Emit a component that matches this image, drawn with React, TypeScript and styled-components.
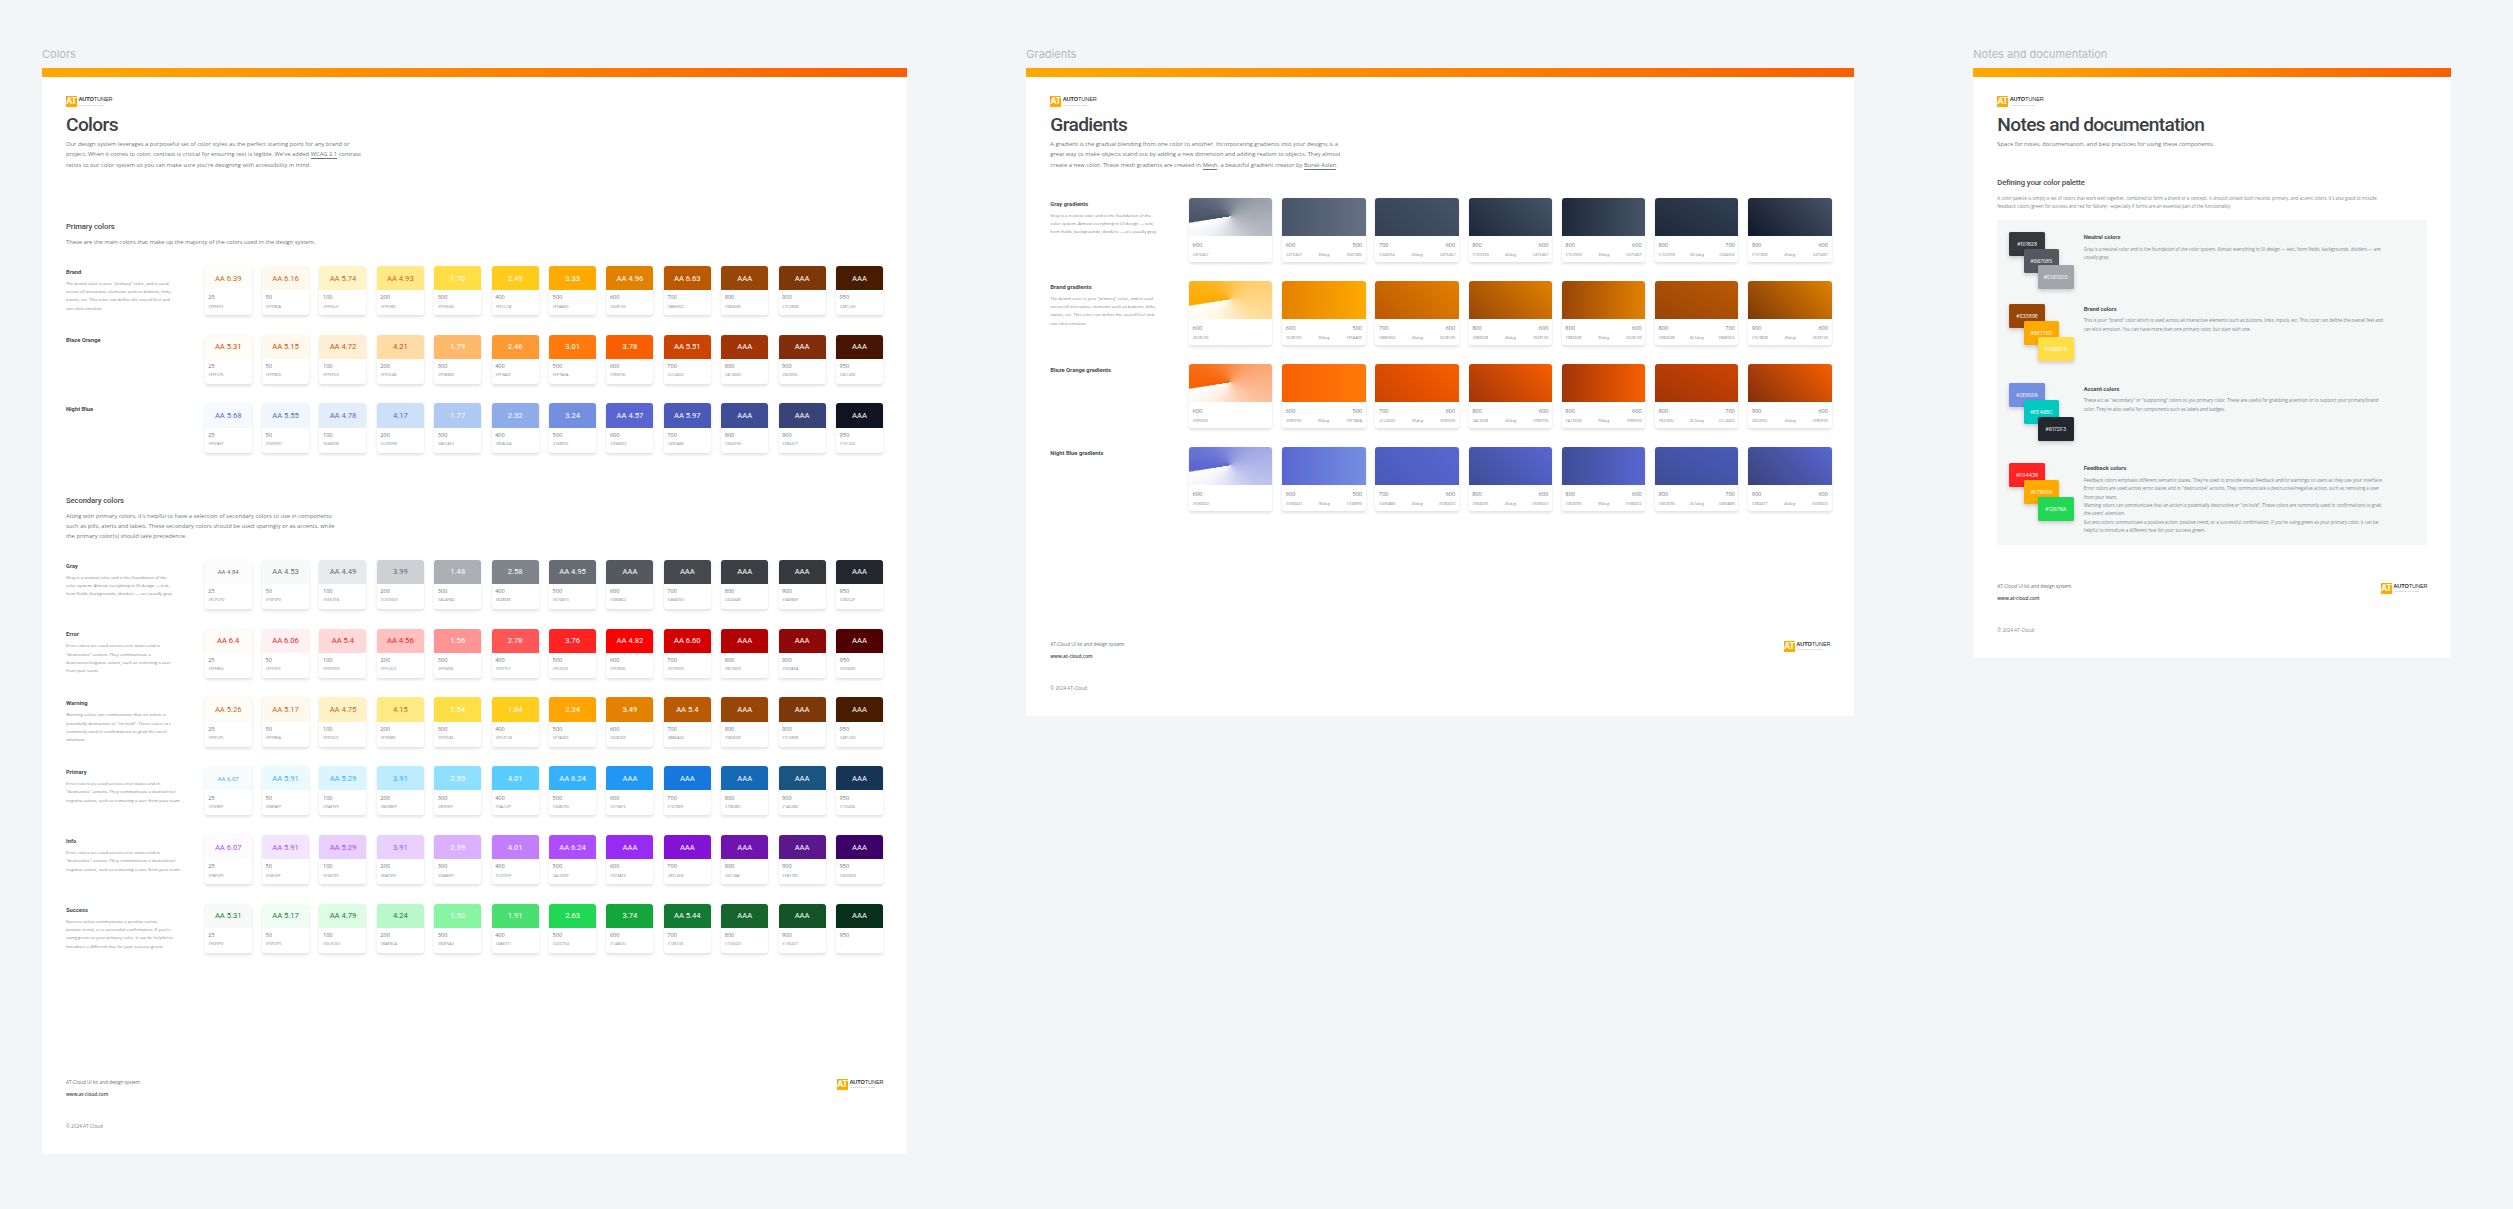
import React, { type ReactElement } from 'react';
import styled, { createGlobalStyle } from 'styled-components';

const HEAD = '"Roboto", "Liberation Sans", sans-serif';
const BODY = '"Open Sans", "Liberation Sans", sans-serif';

interface ISwatch {
  step: string;
  hex: string;
  fill: string;
  label: string;
}

interface IColorRow {
  name: string;
  desc?: string;
  ink: string;
  tiny?: boolean;
  swatches: ISwatch[];
}

interface IGradient {
  from: string;
  to?: string;
  left: string;
  right?: string;
  angle?: string;
  fromHex: string;
  toHex?: string;
}

interface IGradientRow {
  name: string;
  desc?: string;
  cone: string;
  items: IGradient[];
}

const STEPS = ['25', '50', '100', '200', '300', '400', '500', '600', '700', '800', '900', '950'];

const makeSwatches = (hexes: string[], fills: string[], labels: string[]): ISwatch[] =>
  STEPS.map((step, i) => ({ step, hex: hexes[i], fill: fills[i], label: labels[i] }));

const PRIMARY_ROWS: IColorRow[] = [
  {
    name: 'Brand',
    desc: 'The brand color is your "primary" color, and is used\nacross all interactive elements such as buttons, links,\ninputs, etc. This color can define the overall feel and\ncan elicit emotion.',
    ink: '#C9651A',
    swatches: makeSwatches(
      ['#FFFEF5', '#FFF8EA', '#FFF6C5', '#FFE985', '#FFDE46', '#FFCC1B', '#FFAA00', '#E28100', '#BB5902', '#984508', '#7C3808', '#481C00'],
      ['#FFFDF8', '#FFF8EC', '#FFF4C5', '#FFE985', '#FFDE46', '#FFCC1B', '#FFAA00', '#E28100', '#BB5902', '#984508', '#7C3808', '#481C00'],
      ['AA 6.39', 'AA 6.16', 'AA 5.74', 'AA 4.93', '1.70', '2.49', '3.33', 'AA 4.96', 'AA 6.63', 'AAA', 'AAA', 'AAA'],
    ),
  },
  {
    name: 'Blaze Orange',
    ink: '#CC4F0C',
    swatches: makeSwatches(
      ['#FFFCF6', '#FFF8ED', '#FFEFD3', '#FFDCA5', '#FFB96D', '#FF9A32', '#FF7A0A', '#F85F00', '#CC4402', '#A13600', '#822E0C', '#461400'],
      ['#FFFCF6', '#FFF8ED', '#FFEFD5', '#FFDCA5', '#FFB96D', '#FF9A32', '#FF7A0A', '#F85F00', '#CC4402', '#A13508', '#822E0C', '#461400'],
      ['AA 5.31', 'AA 5.15', 'AA 4.72', '4.21', '1.79', '2.46', '3.01', '3.78', 'AA 5.51', 'AAA', 'AAA', 'AAA'],
    ),
  },
  {
    name: 'Night Blue',
    ink: '#5966D2',
    swatches: makeSwatches(
      ['#F5FAFF', '#F0F6FD', '#E4EEFB', '#CDE0F8', '#AFCAF2', '#8FACEA', '#748FE0', '#5966D2', '#495AB9', '#3E4D95', '#384477', '#101322'],
      ['#F5FAFF', '#F0F6FD', '#E4EEFB', '#CDE0F8', '#AFCAF2', '#8FACEA', '#748FE0', '#5966D2', '#495AB9', '#3E4D95', '#384477', '#101322'],
      ['AA 5.68', 'AA 5.55', 'AA 4.78', '4.17', '1.77', '2.32', '3.24', 'AA 4.57', 'AA 5.97', 'AAA', 'AAA', 'AAA'],
    ),
  },
];

const ERROR_TEXT =
  'Error colors are used across error states and in\n"destructive" actions. They communicate a destructive/\nnegative action, such as removing a user from your team.';

const SECONDARY_ROWS: IColorRow[] = [
  {
    name: 'Gray',
    desc: 'Gray is a neutral color and is the foundation of the\ncolor system. Almost everything in UI design — text,\nform fields, backgrounds, dividers — are usually gray.',
    ink: '#676B73',
    tiny: true,
    swatches: makeSwatches(
      ['#FCFCFD', '#F9F9F9', '#E5E7EB', '#CED0D3', '#ACAFB4', '#82868E', '#676B73', '#585B62', '#4B4D53', '#424348', '#3A3B3F', '#282C2F'],
      ['#FCFCFD', '#F8F9F9', '#E8E9EB', '#CED0D3', '#ACAFB4', '#80848B', '#676B73', '#55585F', '#47494E', '#3D3F45', '#37383C', '#23272F'],
      ['AA 4.84', 'AA 4.53', 'AA 4.49', '3.99', '1.48', '2.58', 'AA 4.95', 'AAA', 'AAA', 'AAA', 'AAA', 'AAA'],
    ),
  },
  {
    name: 'Error',
    desc: 'Error colors are used across error states and in\n"destructive" actions. They communicate a\ndestructive/negative action, such as removing a user\nfrom your team.',
    ink: '#F01C1C',
    swatches: makeSwatches(
      ['#FFFBF4', '#FFF0F0', '#FFD0D0', '#FFC0C0', '#FF9494', '#FF5757', '#FF2323', '#FF0000', '#D70000', '#B10303', '#920A0A', '#500000'],
      ['#FFFBF6', '#FFF0F3', '#FFD9D9', '#FFC0C0', '#FF9494', '#FF5757', '#FF2323', '#FF0000', '#D70000', '#B10303', '#8E0A0A', '#500000'],
      ['AA 6.4', 'AA 6.06', 'AA 5.4', 'AA 4.56', '1.56', '2.78', '3.76', 'AA 4.82', 'AA 6.60', 'AAA', 'AAA', 'AAA'],
    ),
  },
  {
    name: 'Warning',
    desc: 'Warning colors can communicate that an action is\npotentially destructive or "on-hold". These colors are\ncommonly used in confirmations to grab the users\'\nattention.',
    ink: '#C9651A',
    swatches: makeSwatches(
      ['#FFFCF5', '#FFF8EA', '#FFF3C5', '#FFE985', '#FFDF46', '#FFCD1B', '#F7A000', '#E28200', '#BB5A02', '#984508', '#7C3808', '#481C00'],
      ['#FFFCF7', '#FFF8EC', '#FFF3C5', '#FFEA85', '#FFDF46', '#FFCD1B', '#FFA400', '#E28200', '#BB5A02', '#984508', '#7C3808', '#481C00'],
      ['AA 5.26', 'AA 5.17', 'AA 4.75', '4.15', '1.54', '1.84', '2.34', '3.49', 'AA 5.4', 'AAA', 'AAA', 'AAA'],
    ),
  },
  {
    name: 'Primary',
    desc: ERROR_TEXT,
    ink: '#34B1FF',
    tiny: true,
    swatches: makeSwatches(
      ['#F5FBFF', '#EBFAFF', '#DAF5FF', '#BDEBFF', '#8FE0FF', '#5ACCFF', '#34B1FD', '#2196F3', '#1678DF', '#186385', '#1A5480', '#153456'],
      ['#F8FBFD', '#EBFAFF', '#DAF5FF', '#BDEBFF', '#8FE0FF', '#5ACCFF', '#34B1FF', '#2196F3', '#1678DF', '#1669B5', '#1A5480', '#153456'],
      ['AA 6.07', 'AA 5.91', 'AA 5.29', '3.91', '2.39', '4.01', 'AA 6.24', 'AAA', 'AAA', 'AAA', 'AAA', 'AAA'],
    ),
  },
  {
    name: 'Info',
    desc: ERROR_TEXT,
    ink: '#AC4DFF',
    swatches: makeSwatches(
      ['#FBF2FF', '#F4E5FF', '#F4D7FF', '#EAD3FF', '#DAB0FF', '#C37DFF', '#AC4DFF', '#972AF3', '#8314D6', '#6F14AF', '#5B178C', '#3D0069'],
      ['#FDFBFF', '#F4E5FF', '#E9CFFF', '#E8D1FF', '#DAB0FF', '#C37DFF', '#AC4DFF', '#972AF3', '#8314D6', '#6F14AF', '#5B178C', '#3D0069'],
      ['AA 6.07', 'AA 5.91', 'AA 5.29', '3.91', '2.39', '4.01', 'AA 6.24', 'AAA', 'AAA', 'AAA', 'AAA', 'AAA'],
    ),
  },
  {
    name: 'Success',
    desc: 'Success colors communicate a positive action,\npositive trend, or a successful confirmation. If you\'re\nusing green as your primary color, it can be helpful to\nintroduce a different hue for your success green.',
    ink: '#138133',
    swatches: makeSwatches(
      ['#F6FEF9', '#F0FDF5', '#DCFCE4', '#BAF8CA', '#84F5A2', '#4AE071', '#22D754', '#14A53C', '#138133', '#15652D', '#135427', '-'],
      ['#F8FAF9', '#F0FDF5', '#DCFCE4', '#BAF8CA', '#88F5A2', '#4AE071', '#22D754', '#14A53C', '#137A33', '#15652D', '#135427', '#07301A'],
      ['AA 5.31', 'AA 5.17', 'AA 4.79', '4.24', '1.52', '1.91', '2.63', '3.74', 'AA 5.44', 'AAA', 'AAA', 'AAA'],
    ),
  },
];

const makeGradients = (c: Record<string, string>, pair: [string, string], dark: string, b800: string): IGradient[] => [
  { from: c['600'], left: '600', fromHex: c['600'] },
  { from: c['600'], to: c['500'], left: '600', right: '500', angle: '90deg', fromHex: c['600'], toHex: c['500'] },
  { from: c['700'], to: c['600'], left: '700', right: '600', angle: '45deg', fromHex: c['700'], toHex: c['600'] },
  { from: c['800'], to: c['600'], left: '800', right: '600', angle: '45deg', fromHex: c['800'], toHex: c['600'] },
  { from: c['800'], to: c['600'], left: '800', right: '600', angle: '90deg', fromHex: c['800'], toHex: c['600'] },
  { from: pair[0], to: pair[1], left: '800', right: '700', angle: '26.5deg', fromHex: b800, toHex: pair[1] },
  { from: c['900'], to: c['600'], left: '900', right: '600', angle: '45deg', fromHex: dark, toHex: c['600'] },
];

const GRADIENT_ROWS: IGradientRow[] = [
  {
    name: 'Gray gradients',
    desc: 'Gray is a neutral color and is the foundation of the\ncolor system. Almost everything in UI design — text,\nform fields, backgrounds, dividers — are usually gray.',
    cone: '#475467',
    items: makeGradients(
      { '500': '#667085', '600': '#475467', '700': '#344054', '800': '#1D2939', '900': '#101828' },
      ['#1D2939', '#344054'],
      '#101828',
      '#1D2939',
    ),
  },
  {
    name: 'Brand gradients',
    desc: 'The brand color is your "primary" color, and is used\nacross all interactive elements such as buttons, links,\ninputs, etc. This color can define the overall feel and\ncan elicit emotion.',
    cone: '#FFAA00',
    items: makeGradients(
      { '500': '#FFAA00', '600': '#E28100', '700': '#BB5902', '800': '#984508', '900': '#7C3808' },
      ['#984508', '#BB5902'],
      '#7C3808',
      '#984508',
    ),
  },
  {
    name: 'Blaze Orange gradients',
    cone: '#F85F00',
    items: makeGradients(
      { '500': '#FF7A0A', '600': '#F85F00', '700': '#CC4402', '800': '#A13508', '900': '#822E0C' },
      ['#A13508', '#CC4402'],
      '#822E0C',
      '#822E0C',
    ),
  },
  {
    name: 'Night Blue gradients',
    cone: '#5966D2',
    items: makeGradients(
      { '500': '#748FE0', '600': '#5966D2', '700': '#495AB9', '800': '#3E4D95', '900': '#384477' },
      ['#3E4D95', '#495AB9'],
      '#384477',
      '#3E4D95',
    ),
  },
];

interface IChip {
  hex: string;
  fill: string;
}

interface IPaletteNote {
  title: string;
  text: string;
  after: number;
  chips: IChip[];
}

const NOTES: IPaletteNote[] = [
  {
    title: 'Neutral colors',
    text: 'Gray is a neutral color and is the foundation of the color system. Almost everything in UI design — text, form fields, backgrounds, dividers — are\nusually gray.',
    after: 14.3,
    chips: [
      { hex: '#101828', fill: '#37383C' },
      { hex: '#667085', fill: '#55585F' },
      { hex: '#D0D5DD', fill: '#A3A5AB' },
    ],
  },
  {
    title: 'Brand colors',
    text: 'This is your "brand" color which is used across all interactive elements such as buttons, links, inputs, etc. This color can define the overall feel and\ncan elicit emotion. You can have more than one primary color, but start with one.',
    after: 22,
    chips: [
      { hex: '#53389E', fill: '#984508' },
      { hex: '#9E77ED', fill: '#FFAA00' },
      { hex: '#D6BBFB', fill: '#FFDE46' },
    ],
  },
  {
    title: 'Accent colors',
    text: 'These act as "secondary" or "supporting" colors to you primary color. These are useful for grabbing attention or to support your primary/brand\ncolor. They\'re also useful for components such as labels and badges.',
    after: 22,
    chips: [
      { hex: '#2E90FA', fill: '#748FE0' },
      { hex: '#EE46BC', fill: '#00C9C0' },
      { hex: '#6172F3', fill: '#23272F' },
    ],
  },
  {
    title: 'Feedback colors',
    text: 'Feedback colors emphasis different semantic states. They\'re used to provide visual feedback and/or warnings to users as they use your interface.\nError colors are used across error states and in "destructive" actions. They communicate a destructive/negative action, such as removing a user\nfrom your team.\nWarning colors can communicate that an action is potentially destructive or "on-hold". These colors are commonly used in confirmations to grab\nthe users\' attention.\nSuccess colors communicate a positive action, positive trend, or a successful confirmation. If you\'re using green as your primary color, it can be\nhelpful to introduce a different hue for your success green.',
    after: 0,
    chips: [
      { hex: '#F04438', fill: '#FF2323' },
      { hex: '#F79009', fill: '#FFAA00' },
      { hex: '#12B76A', fill: '#22D754' },
    ],
  },
];

const Logo = (): ReactElement => (
  <LogoWrapper>
    <LogoMark>AT</LogoMark>
    <LogoWords>
      <LogoName>
        AUTO<LogoNameLight>TUNER</LogoNameLight>
      </LogoName>
      <LogoTag>AUTOMOTIVE TOOL</LogoTag>
    </LogoWords>
  </LogoWrapper>
);

const Footer = (): ReactElement => (
  <FooterWrapper>
    <div>
      <FooterText>AT-Cloud UI kit and design system</FooterText>
      <FooterLink>www.at-cloud.com</FooterLink>
      <FooterCopy>© 2024 AT-Cloud</FooterCopy>
    </div>
    <FooterLogo>
      <Logo />
    </FooterLogo>
  </FooterWrapper>
);

const ColorRows = ({ rows }: { rows: IColorRow[] }): ReactElement => (
  <Rows>
    {rows.map((row) => (
      <ColorRowWrapper key={row.name}>
        <RowInfo>
          <RowName>{row.name}</RowName>
          {row.desc && <RowDesc>{row.desc}</RowDesc>}
        </RowInfo>
        <SwatchGrid>
          {row.swatches.map((s, i) => (
            <Card key={s.step}>
              <Swatch $fill={s.fill} $ink={i < 4 ? row.ink : '#fff'} $tiny={Boolean(row.tiny) && i === 0}>
                {s.label}
              </Swatch>
              <CardMeta>
                <StepName>{s.step}</StepName>
                <HexCode>{s.hex}</HexCode>
              </CardMeta>
            </Card>
          ))}
        </SwatchGrid>
      </ColorRowWrapper>
    ))}
  </Rows>
);

const GradientRows = (): ReactElement => (
  <GradientList>
    {GRADIENT_ROWS.map((row) => (
      <ColorRowWrapper key={row.name}>
        <RowInfo>
          <RowName>{row.name}</RowName>
          {row.desc && <RowDesc>{row.desc}</RowDesc>}
        </RowInfo>
        <GradientGrid>
          {row.items.map((g, i) => (
            <GradientCard key={i}>
              <GradientFill
                $bg={
                  g.to
                    ? `linear-gradient(${g.angle}, ${g.from}, ${g.to})`
                    : `conic-gradient(from 262deg at 50% 48%, ${row.cone} 0%, #fff 99.4%, ${row.cone} 100%)`
                }
              />
              <GradientMeta>
                <MetaLine>
                  <StepName>{g.left}</StepName>
                  {g.right && <StepName>{g.right}</StepName>}
                </MetaLine>
                <MetaLine>
                  <HexCode>{g.fromHex}</HexCode>
                  {g.angle && <HexCode>{g.angle}</HexCode>}
                  {g.toHex && <HexCode>{g.toHex}</HexCode>}
                </MetaLine>
              </GradientMeta>
            </GradientCard>
          ))}
        </GradientGrid>
      </ColorRowWrapper>
    ))}
  </GradientList>
);

const App = (): ReactElement => (
  <Canvas>
    <GlobalStyle />
    <Column $width={865}>
      <FrameLabel>Colors</FrameLabel>
      <Frame $height={1086}>
        <TopBar />
        <FrameBody>
          <Logo />
          <Title>Colors</Title>
          <Intro>
            Our design system leverages a purposeful set of color styles as the perfect starting point for any brand or
            {'\n'}project. When it comes to color, contrast is critical for ensuring text is legible. We've added{' '}
            <InlineLink>WCAG 2.1</InlineLink> contrast{'\n'}ratios to our color system so you can make sure you're
            designing with accessibility in mind.
          </Intro>
          <SectionHead $top={51.2}>Primary colors</SectionHead>
          <Intro $top={3.7}>These are the main colors that make up the majority of the colors used in the design system.</Intro>
          <RowsSpacer $top={19}>
            <ColorRows rows={PRIMARY_ROWS} />
          </RowsSpacer>
          <SectionHead $top={42.7}>Secondary colors</SectionHead>
          <Intro $top={3.6}>
            Along with primary colors, it's helpful to have a selection of secondary colors to use in components{'\n'}such
            as pills, alerts and labels. These secondary colors should be used sparingly or as accents, while{'\n'}the
            primary color(s) should take precedence.
          </Intro>
          <RowsSpacer $top={18.1}>
            <ColorRows rows={SECONDARY_ROWS} />
          </RowsSpacer>
          <Footer />
        </FrameBody>
      </Frame>
    </Column>
    <Column $width={827.7}>
      <FrameLabel>Gradients</FrameLabel>
      <Frame $height={648}>
        <TopBar />
        <FrameBody>
          <Logo />
          <Title>Gradients</Title>
          <Intro>
            A gradient is the gradual blending from one color to another. Incorporating gradients into your designs is a
            {'\n'}great way to make objects stand out by adding a new dimension and adding realism to objects. They almost
            {'\n'}create a new color. These mesh gradients are created in <InlineLink>Mesh</InlineLink>, a beautiful
            gradient creator by <InlineLink>Burak Aslan</InlineLink>.
          </Intro>
          <RowsSpacer $top={28}>
            <GradientRows />
          </RowsSpacer>
          <Footer />
        </FrameBody>
      </Frame>
    </Column>
    <Column $width={477.7}>
      <FrameLabel>Notes and documentation</FrameLabel>
      <Frame $height={590}>
        <TopBar />
        <FrameBody>
          <Logo />
          <Title>Notes and documentation</Title>
          <Intro>Space for notes, documentation, and best practices for using these components.</Intro>
          <SectionHead $top={28}>Defining your color palette</SectionHead>
          <SmallCopy>
            A color palette is simply a set of colors that work well together, combined to form a brand or a concept. It
            should contain both neutral, primary, and accent colors. It's also good to include{'\n'}feedback colors (green
            for success and red for failure) - especially if forms are an essential part of the functionality.
          </SmallCopy>
          <Panel>
            {NOTES.map((note) => (
              <NoteRow key={note.title} $after={note.after}>
                <ChipStack>
                  {note.chips.map((chip, i) => (
                    <Chip key={chip.hex} $fill={chip.fill} $index={i}>
                      {chip.hex}
                    </Chip>
                  ))}
                </ChipStack>
                <NoteText>
                  <NoteTitle>{note.title}</NoteTitle>
                  <NoteCopy>{note.text}</NoteCopy>
                </NoteText>
              </NoteRow>
            ))}
          </Panel>
          <Footer />
        </FrameBody>
      </Frame>
    </Column>
  </Canvas>
);

export default App;

const GlobalStyle = createGlobalStyle`
  html, body {
    margin: 0;
    padding: 0;
    background: #f4f5f7;
  }
  * {
    box-sizing: border-box;
  }
`;

const Canvas = styled.div`
  display: flex;
  column-gap: 119.3px;
  width: 2513px;
  height: 1209px;
  padding: 47px 0 0 42px;
  overflow: hidden;
  background: #f4f5f7;
  font-family: ${BODY};
`;

const Column = styled.div<{ $width: number }>`
  flex: none;
  width: ${(p) => p.$width}px;
`;

const FrameLabel = styled.div`
  height: 21px;
  line-height: 14px;
  font-family: "Inter", sans-serif;
  font-size: 11px;
  color: #b4b8bf;
`;

const Frame = styled.section<{ $height: number }>`
  display: flex;
  flex-direction: column;
  height: ${(p) => p.$height}px;
  background: #fff;
`;

const TopBar = styled.div`
  flex: none;
  height: 9px;
  background: linear-gradient(90deg, #ffaa00, #f85f00);
`;

const FrameBody = styled.div`
  flex: 1;
  display: flex;
  flex-direction: column;
  min-height: 0;
  padding: 19px 24px 23px;
`;

const LogoWrapper = styled.div`
  display: flex;
  align-items: center;
  column-gap: 1.7px;
  width: 46px;
  height: 11px;
  flex: none;
`;

const LogoMark = styled.div`
  width: 10.7px;
  height: 10.7px;
  flex: none;
  background: #ffaa00;
  color: #fff;
  font-family: ${HEAD};
  font-weight: 700;
  font-size: 9px;
  line-height: 10.7px;
  letter-spacing: -0.5px;
  text-align: center;
`;

const LogoWords = styled.div`
  display: flex;
  flex-direction: column;
  row-gap: 0.6px;
`;

const LogoName = styled.div`
  font-family: "Liberation Sans", sans-serif;
  font-weight: 700;
  font-size: 5.6px;
  line-height: 5.6px;
  letter-spacing: -0.1px;
  color: #2f3237;
  white-space: nowrap;
`;

const LogoNameLight = styled.span`
  font-weight: 400;
`;

const LogoTag = styled.div`
  font-family: "Liberation Sans", sans-serif;
  font-size: 1.9px;
  line-height: 2px;
  letter-spacing: 0.55px;
  color: #8b8f96;
  white-space: nowrap;
`;

const Title = styled.h1`
  margin: 6px 0 0;
  height: 24px;
  font-family: ${HEAD};
  font-weight: 500;
  font-size: 19.2px;
  line-height: 24px;
  letter-spacing: -0.65px;
  color: #3c3f45;
  white-space: nowrap;
`;

const Intro = styled.p<{ $top?: number }>`
  margin: ${(p) => p.$top ?? 2.2}px 0 0;
  font-size: 5.8px;
  line-height: 10.2px;
  color: #70757c;
  white-space: pre-line;
`;

const InlineLink = styled.span`
  border-bottom: 0.5px solid #70757c;
`;

const SectionHead = styled.h2<{ $top: number }>`
  margin: ${(p) => p.$top}px 0 0;
  height: 12px;
  font-family: ${HEAD};
  font-weight: 500;
  font-size: 7.7px;
  line-height: 12px;
  letter-spacing: -0.12px;
  color: #484b51;
`;

const RowsSpacer = styled.div<{ $top: number }>`
  margin-top: ${(p) => p.$top}px;
`;

const Rows = styled.div`
  display: flex;
  flex-direction: column;
  row-gap: 19.5px;
`;

const GradientList = styled.div`
  display: flex;
  flex-direction: column;
  row-gap: 19px;
`;

const ColorRowWrapper = styled.div`
  display: flex;
`;

const RowInfo = styled.div`
  flex: none;
  width: 138.7px;
  padding-top: 1.8px;
`;

const RowName = styled.div`
  height: 8px;
  font-family: ${HEAD};
  font-weight: 700;
  font-size: 5.8px;
  line-height: 8px;
  color: #484b51;
  white-space: nowrap;
`;

const RowDesc = styled.div`
  margin-top: 3.1px;
  font-size: 4.3px;
  line-height: 8.35px;
  color: #80858c;
  white-space: pre-line;
`;

const SwatchGrid = styled.div`
  display: grid;
  grid-template-columns: repeat(12, 47px);
  column-gap: 10.4px;
`;

const Card = styled.div`
  height: 49.3px;
  border-radius: 3px;
  background: #fff;
  box-shadow: 0 1.5px 3px rgba(16, 24, 40, 0.13);
  overflow: hidden;
`;

const Swatch = styled.div<{ $fill: string; $ink: string; $tiny: boolean }>`
  display: flex;
  align-items: center;
  justify-content: center;
  height: 24.3px;
  background: ${(p) => p.$fill};
  color: ${(p) => p.$ink};
  font-family: ${HEAD};
  font-weight: 400;
  font-size: ${(p) => (p.$tiny ? 6 : 7.6)}px;
`;

const CardMeta = styled.div`
  display: flex;
  flex-direction: column;
  row-gap: 1.8px;
  padding: 4.2px 3.5px 0;
`;

const StepName = styled.span`
  display: block;
  font-size: 5.6px;
  line-height: 7.4px;
  color: #70757c;
`;

const HexCode = styled.span`
  display: block;
  font-size: 3.9px;
  line-height: 5px;
  color: #80858c;
  white-space: nowrap;
`;

const GradientGrid = styled.div`
  display: grid;
  grid-template-columns: repeat(7, 83.5px);
  column-gap: 9.7px;
`;

const GradientCard = styled.div`
  height: 64px;
  border-radius: 3px;
  background: #fff;
  box-shadow: 0 1.5px 3px rgba(16, 24, 40, 0.13);
  overflow: hidden;
`;

const GradientFill = styled.div<{ $bg: string }>`
  height: 38.3px;
  background: ${(p) => p.$bg};
`;

const GradientMeta = styled.div`
  display: flex;
  flex-direction: column;
  row-gap: 2.8px;
  padding: 5.7px 3.6px 0;
`;

const MetaLine = styled.div`
  display: flex;
  justify-content: space-between;
  align-items: center;
`;

const SmallCopy = styled.p`
  margin: 4.2px 0 0;
  font-size: 4.4px;
  line-height: 8.4px;
  color: #80858c;
  white-space: pre-line;
`;

const Panel = styled.div`
  flex: none;
  display: flex;
  flex-direction: column;
  margin-top: 9.7px;
  height: 325px;
  padding: 11.7px 12px 0;
  background: #f5f6f6;
`;

const NoteRow = styled.div<{ $after: number }>`
  display: flex;
  column-gap: 9.7px;
  margin-bottom: ${(p) => p.$after}px;
`;

const ChipStack = styled.div`
  flex: none;
  width: 64.7px;
  display: flex;
  flex-direction: column;
`;

const Chip = styled.div<{ $fill: string; $index: number }>`
  width: 35.7px;
  height: 24px;
  margin-left: ${(p) => p.$index * 14.35}px;
  margin-top: ${(p) => (p.$index ? -7.2 : 0)}px;
  border-radius: 1.5px;
  background: ${(p) => p.$fill};
  box-shadow: 0 2px 4px rgba(16, 24, 40, 0.2);
  color: rgba(255, 255, 255, 0.85);
  font-family: "Inter", sans-serif;
  font-weight: 500;
  font-size: 5px;
  line-height: 24px;
  text-align: center;
`;

const NoteText = styled.div`
  flex: 1;
  padding-top: 1.3px;
`;

const NoteTitle = styled.div`
  height: 8px;
  font-family: ${HEAD};
  font-weight: 700;
  font-size: 5.8px;
  line-height: 8px;
  color: #484b51;
`;

const NoteCopy = styled.div`
  margin-top: 3.5px;
  font-size: 4.45px;
  line-height: 8.4px;
  color: #80858c;
  white-space: pre-line;
`;

const FooterWrapper = styled.footer`
  display: flex;
  justify-content: space-between;
  align-items: flex-start;
  margin-top: auto;
`;

const FooterText = styled.div`
  font-size: 4.7px;
  line-height: 10px;
  color: #6b7078;
`;

const FooterLink = styled.div`
  margin-top: 1.8px;
  font-weight: 600;
  font-size: 4.7px;
  line-height: 10px;
  color: #44474d;
`;

const FooterCopy = styled.div`
  margin-top: 22px;
  font-size: 4.7px;
  line-height: 10px;
  color: #80858c;
`;

const FooterLogo = styled.div`
  margin-top: 1.7px;
`;
